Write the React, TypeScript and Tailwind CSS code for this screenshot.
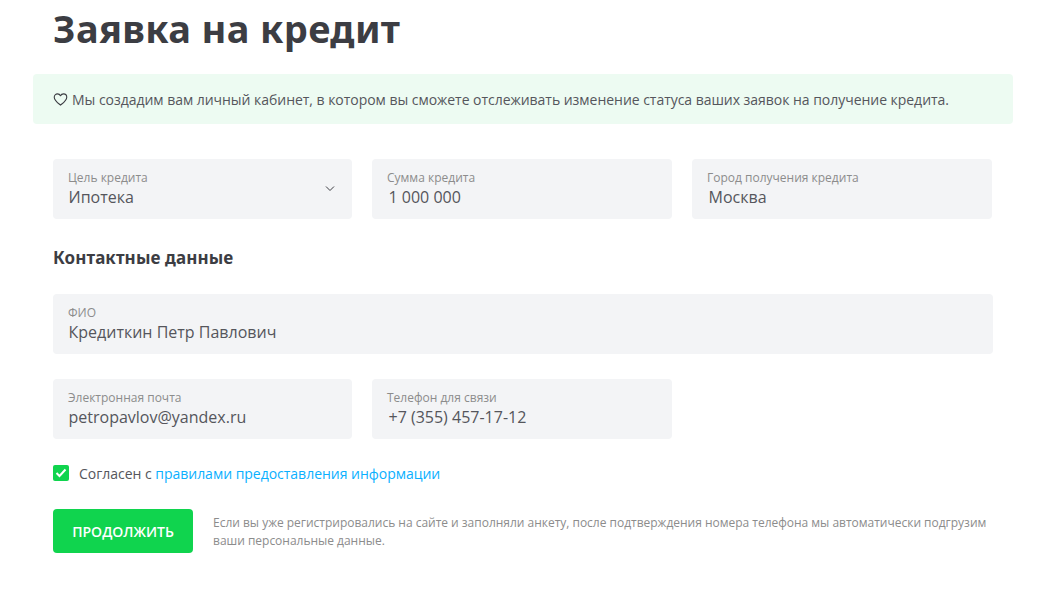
import React from "react";

const Field = ({ label, value, className = "", valueClass = "pl-[15.5px]", children }: {
  label: string;
  value: string;
  className?: string;
  valueClass?: string;
  children?: React.ReactNode;
}) => (
  <div className={`relative h-[60px] rounded-[4px] bg-[#f3f4f6] pt-[11px] ${className}`}>
    <div className="pl-[15px] text-[12px] leading-[15px] text-[#8c8c8c]">{label}</div>
    <div className={`text-[16px] leading-[24px] text-[#55565c] ${valueClass}`}>{value}</div>
    {children}
  </div>
);

const App = () => {
  return (
    <div className="h-[616px] w-[1062px] overflow-hidden bg-white font-['Open_Sans',sans-serif] text-[#3c3d43]">
      <h1 className="ml-[53px] pt-[4px] font-['Noto_Sans',sans-serif] text-[38px] font-bold leading-[48px] tracking-[0.35px] text-[#3c3d43]">
        Заявка на кредит
      </h1>

      <div className="ml-[33px] mt-[22px] flex h-[50px] w-[980px] items-center gap-[4px] rounded-[4px] bg-[#edfbf2] pl-[20px] text-[14px] tracking-[-0.035px] text-[#55565c]">
        <svg width="15" height="15" viewBox="0 0 24 24" fill="none" stroke="#3c3d43" strokeWidth="1.800" strokeLinejoin="round">
          <path d="M12 21C9 18.500 2 13.500 2 8.200 2 5.200 4.400 3 7.200 3 9.200 3 11 4 12 6c1-2 2.800-3 4.800-3C19.600 3 22 5.200 22 8.200 22 13.500 15 18.500 12 21z" />
        </svg>
        <span>Мы создадим вам личный кабинет, в котором вы сможете отслеживать изменение статуса ваших заявок на получение кредита.</span>
      </div>

      <div className="ml-[53px] mt-[35px] flex w-[939px] gap-[20px]">
        <Field label="Цель кредита" value="Ипотека" className="w-[299px]">
          <svg className="absolute right-[17px] top-[26px]" width="10" height="7" viewBox="0 0 10 7" fill="none" stroke="#3c3d43" strokeWidth="1">
            <path d="M1 1.500l4 4 4-4" />
          </svg>
        </Field>
        <Field label="Сумма кредита" value="1 000 000" className="w-[300px]" valueClass="pl-[16.5px]" />
        <Field label="Город получения кредита" value="Москва" className="w-[300px]" valueClass="pl-[16.5px]" />
      </div>

      <h2 className="ml-[53px] mt-[27px] font-['Noto_Sans',sans-serif] text-[17px] font-bold leading-[24px] tracking-[0.1px] text-[#3c3d43]">
        Контактные данные
      </h2>

      <Field label="ФИО" value="Кредиткин Петр Павлович" className="ml-[53px] mt-[24px] w-[940px]" />

      <div className="ml-[53px] mt-[25px] flex gap-[20px]">
        <Field label="Электронная почта" value="petropavlov@yandex.ru" className="w-[299px]" />
        <Field label="Телефон для связи" value="+7 (355) 457-17-12" className="w-[300px]" valueClass="pl-[16.5px]" />
      </div>

      <div className="ml-[53px] mt-[26px] flex h-[16px] items-center gap-[10px] text-[14px] tracking-[-0.02px] text-[#55565c]">
        <span className="flex h-[16px] w-[16px] items-center justify-center rounded-[2px] bg-[#10d44e]">
          <svg width="12" height="10" viewBox="0 0 12 10" fill="none" stroke="#fff" strokeWidth="2">
            <path d="M1.500 5l3 3 6-6.500" />
          </svg>
        </span>
        <span>
          Согласен с <a className="text-[#0ab0ff]">правилами предоставления информации</a>
        </span>
      </div>

      <div className="ml-[53px] mt-[28px] flex items-center gap-[20px]">
        <button className="h-[44px] w-[140px] rounded-[4px] bg-[#10d44e] text-[14px] font-[560] text-white">
          ПРОДОЛЖИТЬ
        </button>
        <p className="w-[790px] translate-y-[1px] text-[12px] leading-[18px] tracking-[-0.015px] text-[#8c8c8c]">
          Если вы уже регистрировались на сайте и заполняли анкету, после подтверждения номера телефона мы автоматически подгрузим ваши персональные данные.
        </p>
      </div>
    </div>
  );
};

export default App;
